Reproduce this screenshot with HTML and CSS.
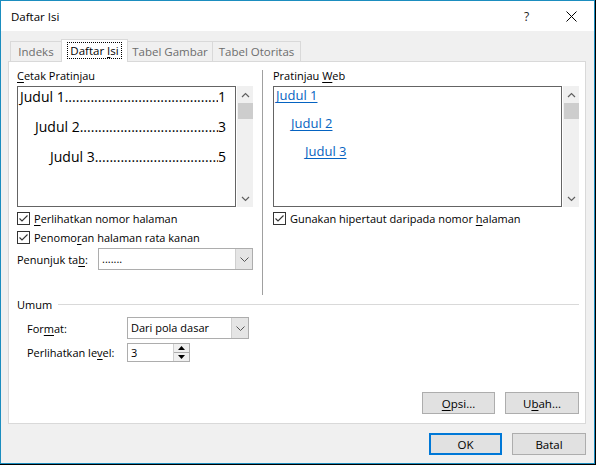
FILE: index.html
```html
<!DOCTYPE html>
<html lang="id">
<head>
<meta charset="utf-8">
<title>Daftar Isi</title>
<link rel="stylesheet" href="styles.css">
</head>
<body>
<div class="window">
  <div class="titlebar">
    <div class="title">Daftar Isi</div>
    <div class="caption-btns">
      <div class="cap-btn">?</div>
      <div class="cap-btn">
        <svg width="11" height="11" viewBox="0 0 11 11"><path d="M0.5 0.5 L10.5 10.5 M10.5 0.5 L0.5 10.5" stroke="#000" stroke-width="1" fill="none"/></svg>
      </div>
    </div>
  </div>

  <div class="client">
    <div class="tabs">
      <div class="tab w-indeks">Indeks</div>
      <div class="tab tab-active w-daftar"><span class="focus">Daftar <u>I</u>si</span></div>
      <div class="tab w-gambar">Tabel Gambar</div>
      <div class="tab w-otoritas">Tabel Otoritas</div>
    </div>

    <div class="panel">
      <div class="columns">
        <div class="col col-left">
          <div class="label"><u>C</u>etak Pratinjau</div>
          <div class="preview-row">
            <div class="preview-box print">
              <div class="toc-line"><span>Judul 1</span><span class="leader"></span><span>1</span></div>
              <div class="toc-line lvl2"><span>Judul 2</span><span class="leader"></span><span>3</span></div>
              <div class="toc-line lvl3"><span>Judul 3</span><span class="leader"></span><span>5</span></div>
            </div>
            <div class="scrollbar">
              <svg class="sb-arrow" width="9" height="6" viewBox="0 0 9 6"><path d="M1 5 L4.5 1.5 L8 5" stroke="#606060" stroke-width="1.2" fill="none"/></svg>
              <div class="sb-thumb"></div>
              <div class="sb-fill"></div>
              <svg class="sb-arrow" width="9" height="6" viewBox="0 0 9 6"><path d="M1 1 L4.5 4.5 L8 1" stroke="#606060" stroke-width="1.2" fill="none"/></svg>
            </div>
          </div>
          <label class="check first">
            <span class="box"><svg width="11" height="11" viewBox="0 0 11 11"><path d="M1.5 5.5 L4 8 L9.5 2.5" stroke="#333" stroke-width="1.1" fill="none"/></svg></span>
            <span><u>P</u>erlihatkan nomor halaman</span>
          </label>
          <label class="check">
            <span class="box"><svg width="11" height="11" viewBox="0 0 11 11"><path d="M1.5 5.5 L4 8 L9.5 2.5" stroke="#333" stroke-width="1.1" fill="none"/></svg></span>
            <span>Penomo<u>r</u>an halaman rata kanan</span>
          </label>
          <div class="field-row tab-row">
            <span class="field-label">Penunjuk ta<u>b</u>:</span>
            <div class="combo combo-tab">
              <span class="combo-text">.......</span>
              <span class="combo-btn"><svg width="9" height="5" viewBox="0 0 9 5"><path d="M0.5 0.5 L4.5 4.5 L8.5 0.5" stroke="#555" stroke-width="1" fill="none"/></svg></span>
            </div>
          </div>
        </div>

        <div class="divider"></div>

        <div class="col col-right">
          <div class="label">Pratinjau <u>W</u>eb</div>
          <div class="preview-row">
            <div class="preview-box web">
              <a class="web-link">Judul 1</a>
              <a class="web-link lvl2">Judul 2</a>
              <a class="web-link lvl3">Judul 3</a>
            </div>
            <div class="scrollbar">
              <svg class="sb-arrow" width="9" height="6" viewBox="0 0 9 6"><path d="M1 5 L4.5 1.5 L8 5" stroke="#606060" stroke-width="1.2" fill="none"/></svg>
              <div class="sb-thumb"></div>
              <div class="sb-fill"></div>
              <svg class="sb-arrow" width="9" height="6" viewBox="0 0 9 6"><path d="M1 1 L4.5 4.5 L8 1" stroke="#606060" stroke-width="1.2" fill="none"/></svg>
            </div>
          </div>
          <label class="check first">
            <span class="box"><svg width="11" height="11" viewBox="0 0 11 11"><path d="M1.5 5.5 L4 8 L9.5 2.5" stroke="#333" stroke-width="1.1" fill="none"/></svg></span>
            <span>Gunakan hipertaut daripada nomor <u>h</u>alaman</span>
          </label>
        </div>
      </div>

      <div class="group">
        <div class="group-head"><span>Umum</span><span class="group-line"></span></div>
        <div class="field-row format-row">
          <span class="field-label wide">For<u>m</u>at:</span>
          <div class="combo combo-format">
            <span class="combo-text">Dari pola dasar</span>
            <span class="combo-btn"><svg width="9" height="5" viewBox="0 0 9 5"><path d="M0.5 0.5 L4.5 4.5 L8.5 0.5" stroke="#555" stroke-width="1" fill="none"/></svg></span>
          </div>
        </div>
        <div class="field-row level-row">
          <span class="field-label wide">Perlihatkan le<u>v</u>el:</span>
          <div class="spin">
            <span class="spin-text">3</span>
            <span class="spin-btns">
              <span class="spin-btn"><svg width="7" height="4" viewBox="0 0 7 4"><path d="M0 4 L3.5 0 L7 4 Z" fill="#000"/></svg></span>
              <span class="spin-btn"><svg width="7" height="4" viewBox="0 0 7 4"><path d="M0 0 L3.5 4 L7 0 Z" fill="#000"/></svg></span>
            </span>
          </div>
        </div>
      </div>

      <div class="panel-actions">
        <button class="btn"><u>O</u>psi...</button>
        <button class="btn wide-btn">U<u>b</u>ah...</button>
      </div>
    </div>

    <div class="footer">
      <button class="btn btn-default">OK</button>
      <button class="btn wide-btn">Batal</button>
    </div>
  </div>
</div>
</body>
</html>
```

FILE: styles.css
```css
* {
  box-sizing: border-box;
}

html, body {
  margin: 0;
  padding: 0;
}

body {
  width: 596px;
  height: 465px;
  background: #000;
  font-family: "Open Sans", "Noto Sans", sans-serif;
  font-size: 11px;
  color: #000;
  overflow: hidden;
}

u {
  text-decoration: underline;
  text-underline-offset: 2px;
}

.window {
  width: 595px;
  height: 464px;
  border: 1px solid #1b8dbf;
  background: #f0f0f0;
  display: flex;
  flex-direction: column;
}

/* title bar */
.titlebar {
  height: 30px;
  background: #fff;
  display: flex;
  align-items: center;
  justify-content: space-between;
}

.title {
  padding-left: 10px;
  font-size: 11.5px;
}

.caption-btns {
  display: flex;
  height: 30px;
}

.cap-btn {
  width: 45px;
  height: 30px;
  display: flex;
  align-items: center;
  justify-content: center;
  font-size: 12px;
  color: #222;
}

/* dialog client area */
.client {
  flex: 1;
  display: flex;
  flex-direction: column;
  padding: 8px 8px 8px 7px;
}

.tabs {
  display: flex;
  height: 22px;
  padding-left: 2px;
  align-items: flex-end;
  position: relative;
  z-index: 1;
}

.tab {
  height: 20px;
  border: 1px solid #d9d9d9;
  border-bottom: none;
  border-right: none;
  background: #f0f0f0;
  color: #6d6d6d;
  font-size: 11.5px;
  display: flex;
  align-items: center;
  justify-content: center;
}

.w-indeks { width: 51px; }
.w-daftar { width: 67px; }
.w-gambar { width: 84px; }
.w-otoritas { width: 89px; border-right: 1px solid #d9d9d9; }

.tab-active {
  height: 23px;
  margin-bottom: -1px;
  background: #fff;
  color: #000;
  border-right: 1px solid #d9d9d9;
  padding-bottom: 1px;
}

.tab-active + .tab {
  border-left: none;
}

.focus {
  outline: 1px dotted #000;
  padding: 0 2px;
  line-height: 15px;
}

/* tab page */
.panel {
  height: 363px;
  background: #fff;
  border: 1px solid #d9d9d9;
  display: flex;
  flex-direction: column;
  padding: 6px 6px 9px 8px;
}

.columns {
  display: flex;
  height: 227px;
}

.col {
  min-width: 0;
}

.col-left {
  width: 236px;
  flex: none;
}

.col-right {
  flex: 1;
}

.divider {
  width: 1px;
  background: #a0a0a0;
  margin: 2px 10px 0 9px;
  flex: none;
}

.label {
  height: 18px;
  line-height: 16px;
}

.preview-row {
  display: flex;
  height: 121px;
  gap: 1px;
}

.preview-box {
  flex: 1;
  min-width: 0;
  overflow: hidden;
  border: 1px solid #646464;
  background: #fff;
}

.scrollbar {
  width: 16px;
  flex: none;
  background: #f0f0f0;
  display: flex;
  flex-direction: column;
  align-items: center;
}

.sb-arrow {
  margin: 6px 0 5px;
}

.sb-thumb {
  width: 15px;
  height: 16px;
  background: #cdcdcd;
}

.sb-fill {
  flex: 1;
}

/* printed TOC preview */
.print {
  padding: 0 9px 0 2px;
  font-size: 14px;
}

.toc-line {
  display: flex;
  height: 19px;
  align-items: center;
  white-space: nowrap;
}

.toc-line + .toc-line {
  margin-top: 11px;
}

.toc-line.lvl2 { padding-left: 15px; }
.toc-line.lvl3 { padding-left: 30px; }

.leader {
  flex: 1;
  min-width: 0;
  width: 0;
  overflow: hidden;
}

.leader::after {
  content: "..............................................................................";
}

/* web TOC preview */
.web {
  display: flex;
  flex-direction: column;
  align-items: flex-start;
  padding: 0 0 0 2px;
  font-size: 13px;
}

.web-link {
  color: #0563c1;
  text-decoration: underline;
  text-underline-offset: 2px;
  height: 28px;
  line-height: 16px;
}

.web-link.lvl2 { margin-left: 15px; }
.web-link.lvl3 { margin-left: 29px; }

/* checkboxes */
.check {
  display: flex;
  align-items: center;
  height: 19px;
  gap: 4px;
  white-space: nowrap;
}

.check.first {
  margin-top: 2px;
}

.box {
  width: 13px;
  height: 13px;
  flex: none;
  border: 1px solid #333;
  background: #fff;
  display: flex;
  align-items: center;
  justify-content: center;
}

/* label + control rows */
.field-row {
  display: flex;
  align-items: center;
}

.tab-row {
  margin-top: 1px;
  height: 22px;
}

.field-label {
  width: 81px;
  flex: none;
}

.field-label.wide {
  width: 100px;
}

.combo {
  height: 22px;
  border: 1px solid #adadad;
  background: #fff;
  display: flex;
  align-items: stretch;
}

.combo-tab {
  flex: 1;
}

.combo-format {
  width: 122px;
}

.combo-text {
  flex: 1;
  padding-left: 3px;
  line-height: 20px;
}

.combo-btn {
  width: 17px;
  background: #e5e5e5;
  border-left: 1px solid #cfcfcf;
  display: flex;
  align-items: center;
  justify-content: center;
}

/* "Umum" group */
.group {
  display: flex;
  flex-direction: column;
}

.group-head {
  display: flex;
  align-items: center;
  height: 18px;
  gap: 6px;
}

.group-line {
  flex: 1;
  height: 1px;
  background: #d9d9d9;
}

.format-row {
  margin-top: 4px;
  padding-left: 10px;
}

.level-row {
  margin-top: 4px;
  padding-left: 10px;
}

.spin {
  width: 63px;
  height: 19px;
  border: 1px solid #adadad;
  display: flex;
  background: #fff;
}

.spin-text {
  flex: 1;
  padding-left: 3px;
  line-height: 17px;
}

.spin-btns {
  width: 16px;
  display: flex;
  flex-direction: column;
  border-left: 1px solid #cfcfcf;
  background: #f0f0f0;
}

.spin-btn {
  flex: 1;
  display: flex;
  align-items: center;
  justify-content: center;
}

.spin-btn + .spin-btn {
  border-top: 1px solid #adadad;
}

/* buttons */
.panel-actions {
  margin-top: auto;
  display: flex;
  justify-content: flex-end;
  gap: 10px;
}

.btn {
  width: 73px;
  height: 22px;
  border: 1px solid #adadad;
  background: #e1e1e1;
  font-family: inherit;
  font-size: 11.5px;
  color: #000;
  padding: 0;
}

.btn.wide-btn {
  width: 74px;
}

.btn-default {
  border: 2px solid #0078d7;
}

.footer {
  margin-top: 9px;
  display: flex;
  justify-content: flex-end;
  gap: 10px;
}
```
